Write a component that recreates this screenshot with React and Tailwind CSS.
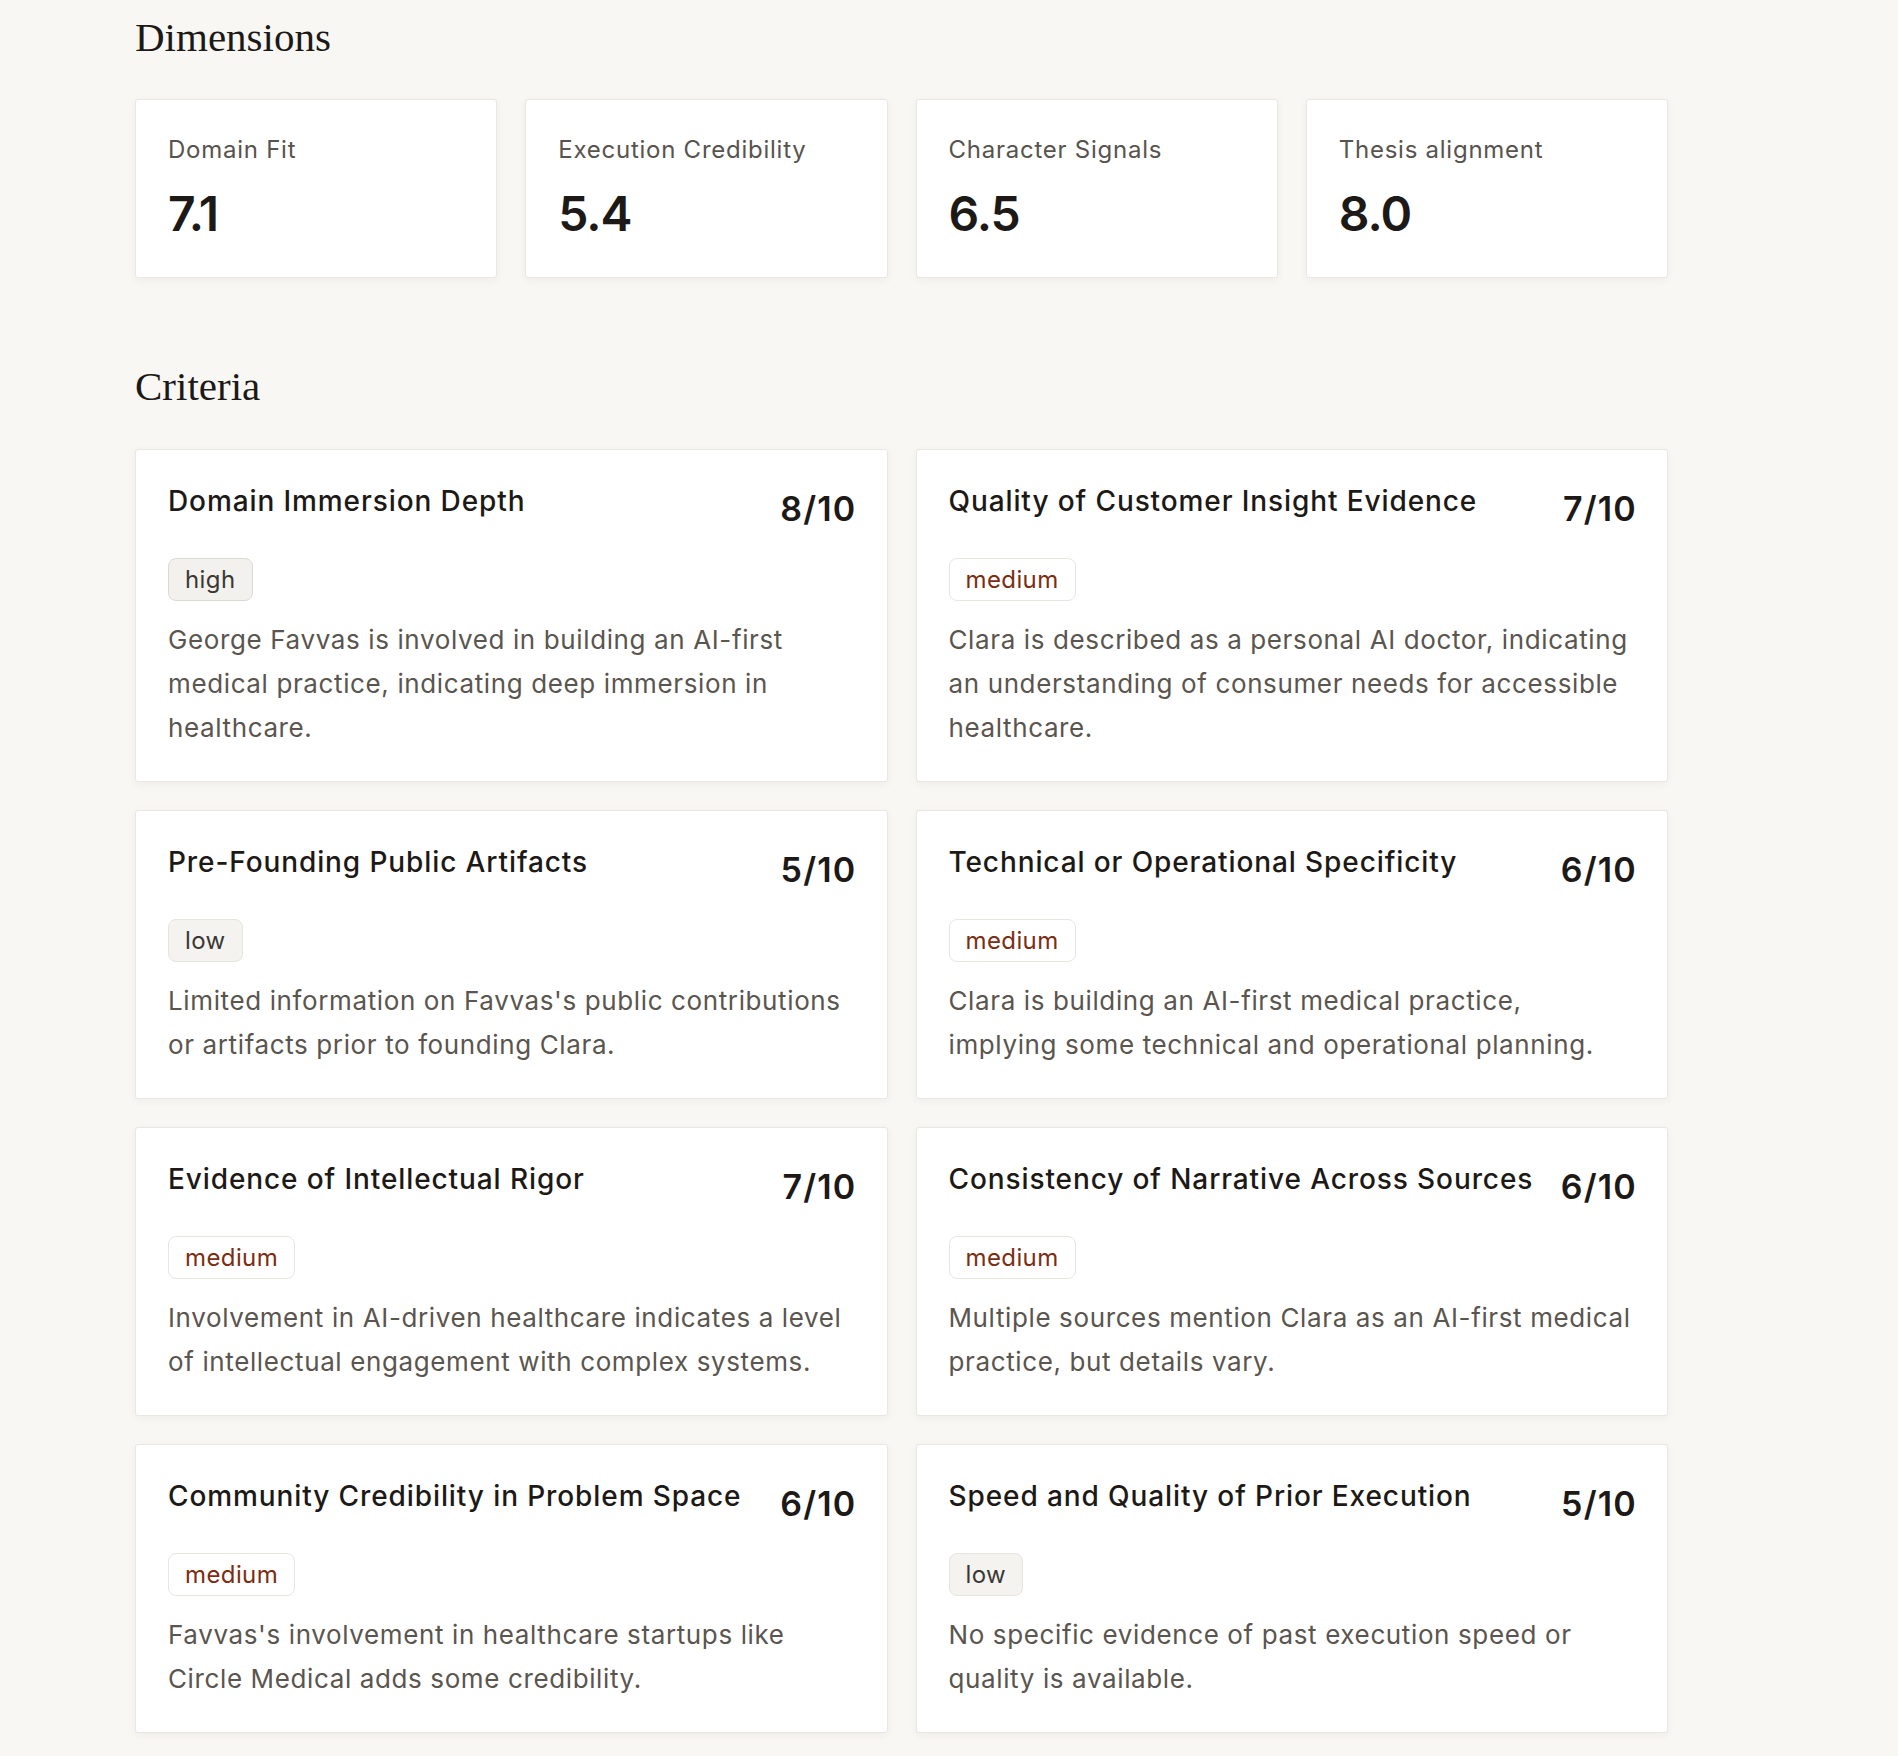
import React from 'react'

const dimensions = [
  { label: 'Domain Fit', value: '7.1' },
  { label: 'Execution Credibility', value: '5.4' },
  { label: 'Character Signals', value: '6.5' },
  { label: 'Thesis alignment', value: '8.0' },
]

// line breaks follow the original layout
const criteria = [
  {
    title: 'Domain Immersion Depth',
    score: 8,
    level: 'high',
    text: 'George Favvas is involved in building an AI-first\nmedical practice, indicating deep immersion in\nhealthcare.',
  },
  {
    title: 'Quality of Customer Insight Evidence',
    score: 7,
    level: 'medium',
    text: 'Clara is described as a personal AI doctor, indicating\nan understanding of consumer needs for accessible\nhealthcare.',
  },
  {
    title: 'Pre-Founding Public Artifacts',
    score: 5,
    level: 'low',
    text: "Limited information on Favvas's public contributions\nor artifacts prior to founding Clara.",
  },
  {
    title: 'Technical or Operational Specificity',
    score: 6,
    level: 'medium',
    text: 'Clara is building an AI-first medical practice,\nimplying some technical and operational planning.',
  },
  {
    title: 'Evidence of Intellectual Rigor',
    score: 7,
    level: 'medium',
    text: 'Involvement in AI-driven healthcare indicates a level\nof intellectual engagement with complex systems.',
  },
  {
    title: 'Consistency of Narrative Across Sources',
    score: 6,
    level: 'medium',
    text: 'Multiple sources mention Clara as an AI-first medical\npractice, but details vary.',
  },
  {
    title: 'Community Credibility in Problem Space',
    score: 6,
    level: 'medium',
    text: "Favvas's involvement in healthcare startups like\nCircle Medical adds some credibility.",
  },
  {
    title: 'Speed and Quality of Prior Execution',
    score: 5,
    level: 'low',
    text: 'No specific evidence of past execution speed or\nquality is available.',
  },
]

const serif = { fontFamily: '"Liberation Serif", "Times New Roman", serif' }

const Badge = ({ level }) => {
  const styles = {
    high: 'bg-[#f2f1ee] border-[#dcdad5] text-[#3b3834]',
    low: 'bg-[#f4f3f0] border-[#e6e4df] text-[#3b3834]',
    medium: 'bg-white border-[#e8e6e1] text-[#7c2d12]',
  }
  return (
    <span className={`inline-flex h-[43px] items-center rounded-[8px] border px-[16px] text-[24px] leading-none tracking-[0.4px] ${styles[level]}`}>
      {level}
    </span>
  )
}

const DimensionCard = ({ label, value }) => (
  <div className="rounded-[3px] border border-[#e9e7e2] bg-white px-8 pt-[33px] pb-[37px] shadow-[0_2px_8px_rgba(40,30,20,0.05)]">
    <div className="text-[24px] leading-[34px] tracking-[0.75px] text-[#57534e]">{label}</div>
    <div className="mt-[20px] text-[48px] font-semibold leading-[53px] tracking-[-1px] text-[#1c1917]">{value}</div>
  </div>
)

const CriterionCard = ({ title, score, level, text }) => (
  <div className="rounded-[3px] border border-[#e9e7e2] bg-white px-8 pt-8 pb-[31px] shadow-[0_2px_8px_rgba(40,30,20,0.05)]">
    <div className="flex items-start justify-between gap-6">
      <h3 className="text-[28px] font-medium leading-[39px] tracking-[0.9px] text-[#1c1917]">{title}</h3>
      <span className="-mr-[2px] shrink-0 text-[34px] font-semibold leading-[54px] tracking-[1.2px] text-[#1c1917]">{score}/10</span>
    </div>
    <div className="mt-[22px] flex">
      <Badge level={level} />
    </div>
    <p className="mt-[17px] whitespace-pre-line text-[26px] leading-[44px] tracking-[0.62px] text-[#5a554f]">{text}</p>
  </div>
)

export default function App() {
  return (
    <div className="min-h-screen bg-[#f8f7f4] pb-[26px]" style={{ fontFamily: 'Inter, "Noto Sans", sans-serif' }}>
      <div className="ml-[135px] w-[1533px] pt-[13px]">
        <h2 className="text-[41px] font-normal leading-[48px] text-[#1c1917]" style={serif}>Dimensions</h2>
        <div className="mt-[38px] grid grid-cols-4 gap-7">
          {dimensions.map(d => (
            <DimensionCard key={d.label} {...d} />
          ))}
        </div>

        <h2 className="mt-[84px] text-[41px] font-normal leading-[48px] text-[#1c1917]" style={serif}>Criteria</h2>
        <div className="mt-[39px] grid grid-cols-2 gap-7">
          {criteria.map(c => (
            <CriterionCard key={c.title} {...c} />
          ))}
        </div>
      </div>
    </div>
  )
}
